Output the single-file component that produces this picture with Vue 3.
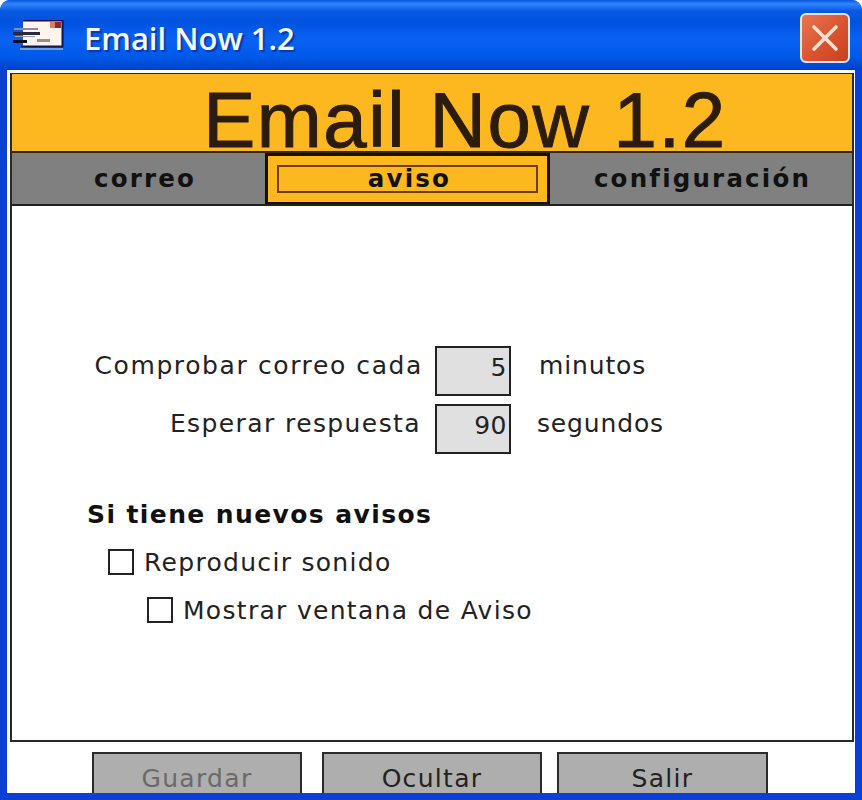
<script setup>
import { ref } from 'vue'

const tabs = ['correo', 'aviso', 'configuración']
const activeTab = ref('aviso')
const playSound = ref(false)
const showWindow = ref(false)
</script>

<template>
  <div class="window">
    <header class="titlebar">
      <svg class="app-icon" width="51" height="31" viewBox="0 0 51 31">
        <rect x="10" y="1" width="39" height="25" fill="#fff4ec" />
        <path d="M10 0.5H49.5V26.5H8" fill="none" stroke="#12124e" stroke-width="2" />
        <rect x="37" y="2" width="5" height="6" fill="#dc7c6c" />
        <rect x="42" y="2" width="6" height="6" fill="#8a2a30" />
        <rect x="1" y="8" width="24" height="2" fill="#8c8c9c" />
        <rect x="0" y="12" width="27" height="3" fill="#2a2a3a" />
        <rect x="2" y="16" width="20" height="1" fill="#9a9aaa" />
        <rect x="0" y="20" width="14" height="3" fill="#0c0c14" />
        <rect x="24" y="19" width="13" height="3" fill="#92928e" />
        <rect x="7" y="28" width="43" height="2" fill="#6f9fe0" />
      </svg>
      <span class="title">Email Now 1.2</span>
      <button class="close" type="button" aria-label="Cerrar">
        <svg width="28" height="28" viewBox="0 0 28 28">
          <path d="M3 3L25 25M25 3L3 25" stroke="#f8e2d0" stroke-width="3.6" stroke-linecap="round" />
        </svg>
      </button>
    </header>

    <div class="client">
      <div class="panel">
        <div class="banner">Email Now 1.2</div>
        <nav class="tabs">
          <div
            v-for="tab in tabs"
            :key="tab"
            class="tab"
            :class="{ active: tab === activeTab }"
          >
            <span class="tab-label">{{ tab }}</span>
          </div>
        </nav>
        <main class="content">
          <div class="intervals">
            <span class="label">Comprobar correo cada</span>
            <div class="number">5</div>
            <span class="unit">minutos</span>
            <span class="label second">Esperar respuesta</span>
            <div class="number">90</div>
            <span class="unit second">segundos</span>
          </div>
          <h2 class="section">Si tiene nuevos avisos</h2>
          <label class="check first">
            <input v-model="playSound" type="checkbox" />
            <span>Reproducir sonido</span>
          </label>
          <label class="check nested">
            <input v-model="showWindow" type="checkbox" />
            <span>Mostrar ventana de Aviso</span>
          </label>
        </main>
      </div>
      <footer class="actions">
        <button class="action save" type="button" disabled>Guardar</button>
        <button class="action hide" type="button">Ocultar</button>
        <button class="action quit" type="button">Salir</button>
      </footer>
    </div>
  </div>
</template>

<style>
html,
body {
  margin: 0;
  background: #fff;
}
</style>

<style scoped>
.window {
  width: 862px;
  height: 800px;
  box-sizing: border-box;
  display: flex;
  flex-direction: column;
  padding: 0 7px 7px;
  overflow: hidden;
  border-radius: 10px 10px 0 0;
  background: #0b3fd6;
  font-family: "DejaVu Sans", Verdana, sans-serif;
  color: #222;
}

.titlebar {
  flex: none;
  height: 70px;
  margin: 0 -7px;
  padding: 0 12px 0 13px;
  display: flex;
  align-items: flex-start;
  background: linear-gradient(
    180deg,
    #0a56dc 0,
    #2f86fb 4px,
    #0a58e2 11px,
    #0052e0 22px,
    #0a62f2 40px,
    #0058e8 58px,
    #0048d2 66px,
    #0040c4 70px
  );
}

.app-icon {
  flex: none;
  margin-top: 20px;
}

.title {
  margin: 17px 0 0 20px;
  font-family: "Open Sans", sans-serif;
  font-size: 31px;
  line-height: 42px;
  font-weight: 600;
  color: #f2f8ff;
  text-shadow: 2px 2px 1px #0a3aa8;
}

.close {
  flex: none;
  width: 50px;
  height: 50px;
  margin: 13px 0 0 auto;
  padding: 0;
  display: flex;
  align-items: center;
  justify-content: center;
  border: 2px solid #dfe6f5;
  border-radius: 6px;
  background: linear-gradient(135deg, #e8764f, #d9502e 60%, #c5411f);
}

.client {
  flex: 1;
  min-height: 0;
  display: flex;
  flex-direction: column;
  overflow: hidden;
  background: #fff;
}

.panel {
  flex: none;
  height: 669px;
  margin: 3px 1px 0 3px;
  display: flex;
  flex-direction: column;
  box-sizing: border-box;
  border: 1px solid #2a2a2a;
  border-width: 1px 2px 2px 2px;
}

.banner {
  flex: none;
  height: 79px;
  box-sizing: border-box;
  padding: 16px 0 0 66px;
  background: #fdb71f;
  border-bottom: 2px solid #3a2208;
  font-family: "Liberation Sans", Arial, sans-serif;
  font-size: 78px;
  line-height: 60px;
  letter-spacing: 1.6px;
  text-align: center;
  color: #2b1c0e;
  -webkit-text-stroke: 1px #2b1c0e;
}

.tabs {
  flex: none;
  height: 53px;
  display: grid;
  grid-template-columns: 253px 285px 1fr;
  grid-template-rows: 51px;
  background: #808080;
  border-bottom: 2px solid #222;
  box-sizing: border-box;
}

.tab {
  min-height: 0;
  display: flex;
  align-items: center;
  justify-content: center;
  font-size: 24.5px;
  line-height: 24px;
  font-weight: 700;
  letter-spacing: 2.2px;
  color: #111;
}

.tab:first-child {
  padding-left: 13px;
}

.tab:last-child {
  padding-left: 3px;
}

.tab.active {
  box-sizing: border-box;
  padding: 9px;
  background: #fdb71f;
  border: 3px solid #1c0f00;
  border-bottom-width: 2px;
}

.tab.active .tab-label {
  flex: 1;
  align-self: stretch;
  display: flex;
  align-items: center;
  justify-content: center;
  padding-left: 4px;
  border: 2px solid #6e3f00;
}

.content {
  flex: 1;
  min-height: 0;
  padding-top: 140px;
  font-size: 25px;
  letter-spacing: 1.3px;
}

.intervals {
  display: grid;
  grid-template-columns: 423px 76px auto;
  grid-auto-rows: 50px;
  row-gap: 8px;
  align-items: start;
}

.label {
  margin-top: 5px;
  padding-right: 12px;
  text-align: right;
  white-space: nowrap;
  letter-spacing: 1.6px;
}

.label.second {
  padding-right: 14px;
  letter-spacing: 1.4px;
}

.unit {
  margin-top: 5px;
  padding-left: 28px;
  white-space: nowrap;
  letter-spacing: 0.85px;
}

.unit.second {
  padding-left: 26px;
}

.number {
  height: 50px;
  box-sizing: border-box;
  padding: 5px 2px 0 0;
  text-align: right;
  background: #e0e0e0;
  border: 2px solid #222;
  letter-spacing: 0.5px;
}

.section {
  margin: 44px 0 0 75px;
  font-size: 25px;
  font-weight: 700;
  letter-spacing: 1.4px;
  line-height: 34px;
  color: #111;
}

.check {
  display: flex;
  align-items: center;
  gap: 10px;
  height: 30px;
}

.check input {
  appearance: none;
  flex: none;
  width: 26px;
  height: 26px;
  margin: 0;
  box-sizing: border-box;
  background: #fff;
  border: 2px solid #222;
}

.check.first {
  margin: 15px 0 0 96px;
}

.check.nested {
  margin: 18px 0 0 135px;
}

.actions {
  flex: none;
  display: flex;
  padding: 10px 0 0 85px;
}

.action {
  flex: none;
  height: 56px;
  box-sizing: border-box;
  padding: 0 0 4px;
  background: #aeaeae;
  border: 2px solid #2b2b2b;
  font-family: "DejaVu Sans", Verdana, sans-serif;
  font-size: 25px;
  letter-spacing: 1.3px;
  color: #222;
}

.save {
  width: 210px;
  color: #6a6a6a;
}

.hide {
  width: 220px;
  margin-left: 20px;
}

.quit {
  width: 211px;
  margin-left: 15px;
}
</style>
